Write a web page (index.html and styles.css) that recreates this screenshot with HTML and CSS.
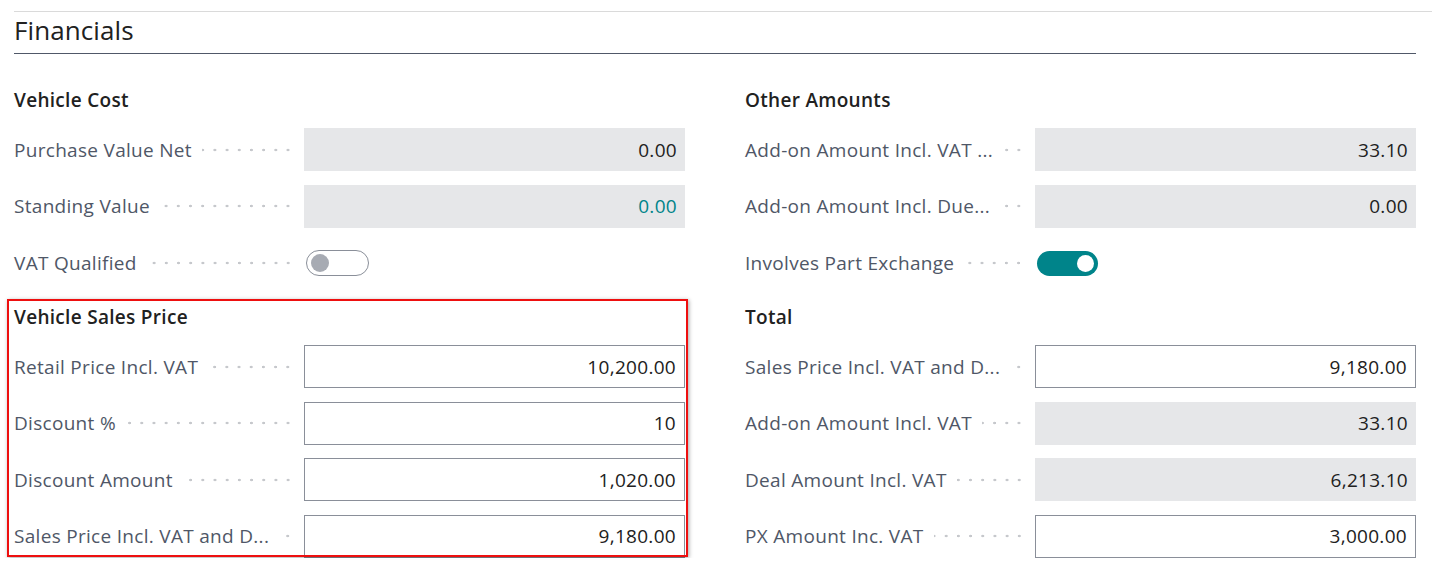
FILE: index.html
```html
<!DOCTYPE html>
<html lang="en">
<head>
<meta charset="utf-8">
<title>Financials</title>
<link rel="stylesheet" href="styles.css">
</head>
<body>
<div class="page">
  <div class="topline"></div>
  <h1 class="title">Financials</h1>
  <div class="columns">
    <div class="col">
      <section class="group">
        <h2 class="group-title">Vehicle Cost</h2>
        <div class="field">
          <span class="label"><span class="label-text">Purchase Value Net</span><span class="dots"></span></span>
          <span class="value readonly">0.00</span>
        </div>
        <div class="field">
          <span class="label"><span class="label-text">Standing Value</span><span class="dots"></span></span>
          <span class="value readonly link">0.00</span>
        </div>
        <div class="field">
          <span class="label"><span class="label-text">VAT Qualified</span><span class="dots"></span></span>
          <span class="value toggle-cell"><span class="toggle off"><span class="knob"></span></span></span>
        </div>
      </section>
      <section class="group highlighted">
        <h2 class="group-title">Vehicle Sales Price</h2>
        <div class="field">
          <span class="label"><span class="label-text">Retail Price Incl. VAT</span><span class="dots"></span></span>
          <span class="value editable">10,200.00</span>
        </div>
        <div class="field">
          <span class="label"><span class="label-text">Discount %</span><span class="dots"></span></span>
          <span class="value editable">10</span>
        </div>
        <div class="field">
          <span class="label"><span class="label-text">Discount Amount</span><span class="dots"></span></span>
          <span class="value editable">1,020.00</span>
        </div>
        <div class="field">
          <span class="label"><span class="label-text">Sales Price Incl. VAT and D...</span><span class="dots"></span></span>
          <span class="value editable">9,180.00</span>
        </div>
        <div class="highlight-frame"></div>
      </section>
    </div>
    <div class="col">
      <section class="group">
        <h2 class="group-title">Other Amounts</h2>
        <div class="field">
          <span class="label"><span class="label-text">Add-on Amount Incl. VAT ...</span><span class="dots"></span></span>
          <span class="value readonly">33.10</span>
        </div>
        <div class="field">
          <span class="label"><span class="label-text">Add-on Amount Incl. Due...</span><span class="dots"></span></span>
          <span class="value readonly">0.00</span>
        </div>
        <div class="field">
          <span class="label"><span class="label-text">Involves Part Exchange</span><span class="dots"></span></span>
          <span class="value toggle-cell"><span class="toggle on"><span class="knob"></span></span></span>
        </div>
      </section>
      <section class="group">
        <h2 class="group-title">Total</h2>
        <div class="field">
          <span class="label"><span class="label-text">Sales Price Incl. VAT and D...</span><span class="dots"></span></span>
          <span class="value editable">9,180.00</span>
        </div>
        <div class="field">
          <span class="label"><span class="label-text">Add-on Amount Incl. VAT</span><span class="dots"></span></span>
          <span class="value readonly">33.10</span>
        </div>
        <div class="field">
          <span class="label"><span class="label-text">Deal Amount Incl. VAT</span><span class="dots"></span></span>
          <span class="value readonly">6,213.10</span>
        </div>
        <div class="field">
          <span class="label"><span class="label-text">PX Amount Inc. VAT</span><span class="dots"></span></span>
          <span class="value editable">3,000.00</span>
        </div>
      </section>
    </div>
  </div>
</div>
</body>
</html>
```
FILE: styles.css
```css
* { box-sizing: border-box; }
html, body { margin: 0; padding: 0; background: #fff; }
body {
  font-family: "Open Sans", "Noto Sans", sans-serif;
  color: #212121;
  overflow: hidden;
}
.page {
  padding: 11px 0 0 14px;
}
.topline {
  border-top: 1px solid #dadada;
}
.title {
  margin: 0 16px 0 0;
  font-size: 26px;
  font-weight: 400;
  line-height: 36px;
  height: 42px;
  border-bottom: 1px solid #505868;
  color: #212121;
  letter-spacing: 0.1px;
}
.columns {
  display: grid;
  grid-template-columns: 671px 671px;
  column-gap: 60px;
  margin-top: 33px;
}
.col {
  display: flex;
  flex-direction: column;
  gap: 20px;
}
.group {
  display: flex;
  flex-direction: column;
  gap: 13.5px;
  position: relative;
}
.group-title {
  margin: 0;
  font-size: 19px;
  font-weight: 600;
  line-height: 27.5px;
  height: 27.5px;
  letter-spacing: 0.3px;
  color: #212121;
}
.field {
  display: grid;
  grid-template-columns: 290px 381px;
  height: 43px;
}
.label {
  display: flex;
  align-items: center;
  padding-right: 10px;
  min-width: 0;
  color: #4f5767;
  font-size: 19px;
  letter-spacing: 0.3px;
}
.label-text {
  white-space: nowrap;
  flex: none;
}
.dots {
  flex: 1;
  height: 4px;
  margin-left: 10px;
  background-image: radial-gradient(circle, #c6c8cc 1.1px, transparent 1.6px);
  background-size: 12.2px 4px;
  background-repeat: repeat-x;
  background-position: right center;
}
.value {
  display: flex;
  align-items: center;
  justify-content: flex-end;
  height: 43px;
  padding: 0 8px;
  font-size: 19px;
  letter-spacing: 0.3px;
  color: #212121;
}
.readonly { background: #e6e7e9; }
.readonly.link { color: #00848a; }
.editable {
  background: #fff;
  border: 1px solid #8a8f99;
}
.toggle-cell {
  justify-content: flex-start;
  padding: 0 0 0 2px;
}
.toggle {
  display: flex;
  align-items: center;
  width: 63px;
  height: 26px;
  border-radius: 13px;
  padding: 0 4px;
}
.toggle.off {
  border: 1px solid #8a8f99;
  background: #fff;
}
.toggle.off .knob {
  width: 18px;
  height: 18px;
  border-radius: 50%;
  background: #a7abb3;
}
.toggle.on {
  width: 61px;
  height: 25px;
  background: #00848a;
  justify-content: flex-end;
  margin-top: 1px;
}
.toggle.on .knob {
  width: 17px;
  height: 17px;
  border-radius: 50%;
  background: #fff;
}
.highlight-frame {
  position: absolute;
  left: -7px;
  top: -5px;
  width: 681px;
  height: 258px;
  border: 2px solid #ee0f0f;
  box-shadow: 1px 1px 4px rgba(0, 0, 0, 0.35);
  pointer-events: none;
}
```
